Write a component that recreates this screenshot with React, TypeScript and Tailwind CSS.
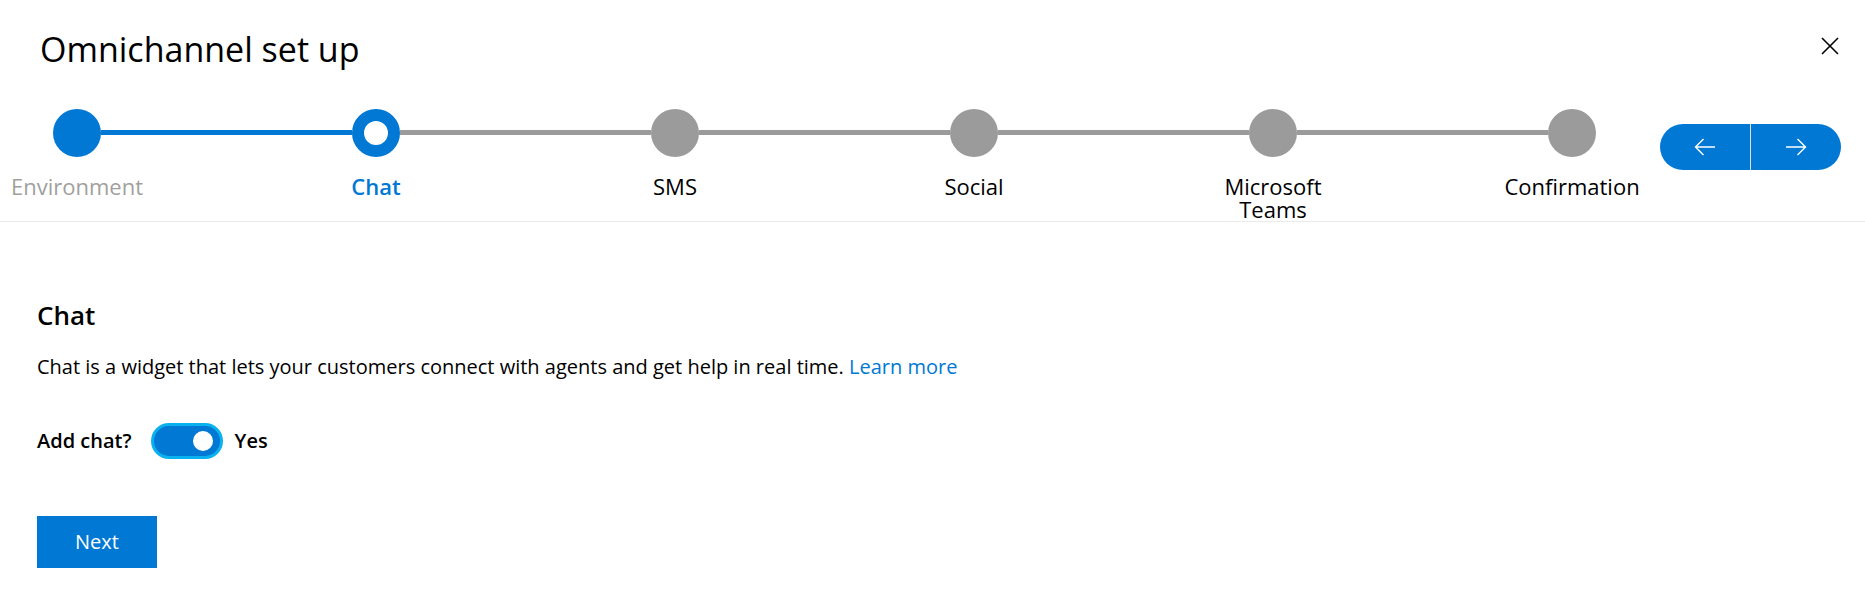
import React, { useState } from 'react';

type Step = { label: string; state: 'done' | 'current' | 'todo' };

const steps: Step[] = [
  { label: 'Environment', state: 'done' },
  { label: 'Chat', state: 'current' },
  { label: 'SMS', state: 'todo' },
  { label: 'Social', state: 'todo' },
  { label: 'Microsoft Teams', state: 'todo' },
  { label: 'Confirmation', state: 'todo' },
];

const StepDot: React.FC<{ state: Step['state'] }> = ({ state }) => {
  if (state === 'done') return <div className="relative z-10 h-[48px] w-[48px] rounded-full bg-[#0078d4]" />;
  if (state === 'current')
    return <div className="relative z-10 h-[48px] w-[48px] rounded-full border-[12px] border-[#0078d4] bg-white" />;
  return <div className="relative z-10 h-[48px] w-[48px] rounded-full bg-[#9b9b9b]" />;
};

const labelClass = (state: Step['state']) => {
  if (state === 'done') return 'text-[#a19f9d]';
  if (state === 'current') return 'text-[#0078d4] font-semibold';
  return 'text-black';
};

const Stepper: React.FC = () => (
  <div className="flex items-start pl-[2px]">
    {steps.map((step, i) => (
      <React.Fragment key={step.label}>
        {i > 0 && (
          <div
            className={`-mx-[51px] mt-[21px] h-[5px] w-[251px] shrink-0 ${
              steps[i].state === 'todo' ? 'bg-[#9b9b9b]' : 'bg-[#0078d4]'
            }`}
          />
        )}
        <div className="flex w-[150px] shrink-0 flex-col items-center">
          <StepDot state={step.state} />
          <div className={`mt-[18px] px-[20px] text-center text-[22px] leading-[23px] ${labelClass(step.state)}`}>
            {step.label}
          </div>
        </div>
      </React.Fragment>
    ))}
  </div>
);

const App: React.FC = () => {
  const [addChat, setAddChat] = useState(true);

  return (
    <div className="min-h-[598px] w-full bg-white font-['Open_Sans',sans-serif] text-black">
      {/* Header */}
      <div className="flex items-start justify-between pl-[40px] pt-[29px]">
        <h1 className="text-[34px] leading-[40px] font-normal">Omnichannel set up</h1>
        <button className="mr-[26px] mt-[8px]">
          <svg width="18" height="18" viewBox="0 0 18 18" fill="none" stroke="#000" strokeWidth="1.6">
            <path d="M1 1L17 17M17 1L1 17" />
          </svg>
        </button>
      </div>

      {/* Stepper */}
      <div className="mt-[40px] flex items-start border-b border-[#edebe9]">
        <Stepper />
        <div className="ml-[13px] mt-[15px] flex h-[46px] w-[181px] overflow-hidden rounded-full bg-[#0078d4]">
          <button className="flex flex-1 items-center justify-center">
            <svg width="22" height="20" viewBox="0 0 22 20" fill="none" stroke="#fff" strokeWidth="1.4">
              <path d="M21 10H1.5M9.5 2L1.5 10l8 8" />
            </svg>
          </button>
          <div className="w-px bg-[#e1dfdd]" />
          <button className="flex flex-1 items-center justify-center">
            <svg width="22" height="20" viewBox="0 0 22 20" fill="none" stroke="#fff" strokeWidth="1.4">
              <path d="M1 10h19.5M12.5 2l8 8-8 8" />
            </svg>
          </button>
        </div>
      </div>

      {/* Chat section */}
      <div className="px-[37px] pb-[30px] pt-[77px]">
        <h2 className="text-[26px] leading-[32px] font-semibold">Chat</h2>
        <p className="mt-[22px] text-[20px] leading-[28px]">
          Chat is a widget that lets your customers connect with agents and get help in real time.{' '}
          <a className="text-[#0078d4]">Learn more</a>
        </p>

        <div className="mt-[42px] flex h-[36px] items-center">
          <span className="text-[20px] font-semibold">Add chat?</span>
          <button
            onClick={() => setAddChat(!addChat)}
            className="ml-[19px] flex h-[36px] w-[72px] items-center rounded-full border-[3px] border-[#0ab1ef] bg-[#0078d4] px-[7px]"
          >
            <span className={`h-[20px] w-[20px] rounded-full bg-white ${addChat ? 'ml-auto' : ''}`} />
          </button>
          <span className="ml-[12px] text-[20px] font-semibold">{addChat ? 'Yes' : 'No'}</span>
        </div>

        <button className="mt-[57px] h-[52px] w-[120px] bg-[#0078d4] text-[20px] text-white">Next</button>
      </div>
    </div>
  );
};

export default App;
